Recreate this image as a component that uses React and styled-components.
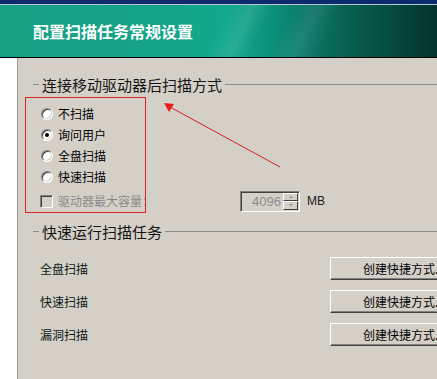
import React from 'react';
import styled, { createGlobalStyle } from 'styled-components';

const GlobalStyle = createGlobalStyle`
  html, body {
    margin: 0;
    padding: 0;
    overflow: hidden;
    background: #fff;
  }
  body {
    font-family: "Noto Sans CJK SC", "Noto Sans", sans-serif;
  }
`;

const Window = styled.div`
  position: relative;
  width: 437px;
  height: 379px;
  display: flex;
  flex-direction: column;
  overflow: hidden;
`;

const Header = styled.header`
  flex: none;
  height: 53px;
  border-top: 4px solid #0c2b6d;
  border-bottom: 1px solid #000;
  box-shadow: inset 0 1px 0 #b7c9d3;
  display: flex;
  align-items: center;
  padding-left: 33px;
  background:
    linear-gradient(115deg, transparent 0 50%, rgba(255, 255, 255, 0.1) 55%, transparent 59%, transparent 64%, rgba(255, 255, 255, 0.08) 69%, transparent 74%),
    linear-gradient(90deg, #18a083 0%, #14a588 40%, #11a88d 52%, #0d917b 62%, #0a7868 70%, #07604f 80%, #054a3f 90%, #02332b 100%);
`;

const Title = styled.h1`
  margin: 0;
  color: #fff;
  font-size: 16px;
  font-weight: 700;
  line-height: 1;
`;

const Body = styled.div`
  flex: 1;
  display: flex;
`;

const Strip = styled.div`
  flex: none;
  width: 17px;
  background: #fff;
  border-right: 1px solid #9c9c9c;
`;

const Panel = styled.main`
  flex: 1;
  min-width: 0;
  background: #d4d0c8;
  padding: 17px 0 0 15px;
  display: flex;
  flex-direction: column;
`;

const GroupTitle = styled.div`
  height: 18px;
  margin-top: ${p => p.$top || 0}px;
  display: flex;
  align-items: center;
  font-size: 15px;
  line-height: 1;
  color: #151515;
  white-space: nowrap;

  &::before {
    content: '';
    width: 6px;
    margin-right: 3px;
    border-top: 1px solid #8c8c8c;
  }

  &::after {
    content: '';
    flex: 1;
    margin-left: 3px;
    border-top: 1px solid #8c8c8c;
  }
`;

const OptionList = styled.div`
  margin: 10px 0 0 8px;
  display: flex;
  flex-direction: column;
`;

const RadioRow = styled.label`
  height: 21px;
  display: flex;
  align-items: center;
  gap: 5px;
  font-size: 12px;
  line-height: 1;
  color: #000;
`;

const Radio = styled.span`
  position: relative;
  box-sizing: border-box;
  width: 12px;
  height: 12px;
  border-radius: 50%;
  border: 1px solid;
  border-color: #808080 #ffffff #ffffff #808080;
  box-shadow: inset 1px 1px 0 #404040, inset -1px -1px 0 #d4d0c8;
  background: #fff;

  &::after {
    content: '';
    display: ${p => (p.$checked ? 'block' : 'none')};
    position: absolute;
    left: 3px;
    top: 3px;
    width: 4px;
    height: 4px;
    border-radius: 50%;
    background: #000;
  }
`;

const CheckRow = styled.div`
  height: 22px;
  margin: 3px 0 0 -1px;
  display: flex;
  align-items: center;
`;

const CheckCell = styled.label`
  flex: none;
  width: 200px;
  display: flex;
  align-items: center;
  gap: 5px;
  font-size: 12px;
  line-height: 1;
  color: #8a8a8a;
  white-space: nowrap;
`;

const Check = styled.span`
  box-sizing: border-box;
  width: 13px;
  height: 13px;
  border: 1px solid;
  border-color: #808080 #ffffff #ffffff #808080;
  box-shadow: inset 1px 1px 0 #404040;
  background: #d4d0c8;
`;

const Spin = styled.div`
  flex: none;
  box-sizing: border-box;
  width: 60px;
  height: 21px;
  display: flex;
  border: 1px solid;
  border-color: #808080 #ffffff #ffffff #808080;
  box-shadow: inset 1px 1px 0 #404040;
  background: #d4d0c8;
`;

const SpinValue = styled.span`
  flex: 1;
  text-align: right;
  padding: 0 2px 0 0;
  font-family: "Liberation Sans", Arial, sans-serif;
  font-size: 13px;
  line-height: 19px;
  color: #8c8c8c;
`;

const SpinButtons = styled.div`
  flex: none;
  width: 15px;
  margin: 1px 1px 1px 0;
  display: flex;
  flex-direction: column;
`;

const SpinButton = styled.span`
  flex: 1;
  box-sizing: border-box;
  border: 1px solid;
  border-color: #ffffff #404040 #404040 #ffffff;
  background: #d4d0c8;
  display: flex;
  align-items: center;
  justify-content: center;

  &::after {
    content: '';
    border-left: 2px solid transparent;
    border-right: 2px solid transparent;
    ${p => (p.$down ? 'border-top: 2px solid #8c8c8c;' : 'border-bottom: 2px solid #8c8c8c;')}
  }
`;

const Unit = styled.span`
  margin-left: 7px;
  font-family: "Liberation Sans", Arial, sans-serif;
  font-size: 12px;
  color: #1a1a1a;
`;

const TaskList = styled.div`
  margin: 17px 0 0 7px;
  display: flex;
  flex-direction: column;
`;

const TaskRow = styled.div`
  height: 33px;
  display: flex;
  align-items: flex-start;
`;

const TaskName = styled.span`
  flex: none;
  width: 290px;
  font-size: 12px;
  line-height: 23px;
  color: #0d1a12;
`;

const ShortcutButton = styled.button`
  flex: none;
  box-sizing: border-box;
  width: 148px;
  height: 23px;
  padding: 0;
  border: 1px solid;
  border-color: #ffffff #404040 #404040 #ffffff;
  box-shadow: inset -1px -1px 0 #808080;
  background: #d4d0c8;
  font-family: "Noto Sans CJK SC", sans-serif;
  font-size: 12px;
  line-height: 1;
  color: #000;
  text-align: center;
  white-space: nowrap;
`;

const Marks = styled.svg`
  position: absolute;
  left: 0;
  top: 0;
  pointer-events: none;
`;

const modes = [
  { label: '不扫描', checked: false },
  { label: '询问用户', checked: true },
  { label: '全盘扫描', checked: false },
  { label: '快速扫描', checked: false },
];

const tasks = ['全盘扫描', '快速扫描', '漏洞扫描'];

export default function App() {
  return (
    <Window>
      <GlobalStyle />
      <Header>
        <Title>配置扫描任务常规设置</Title>
      </Header>
      <Body>
        <Strip />
        <Panel>
          <GroupTitle>连接移动驱动器后扫描方式</GroupTitle>
          <OptionList>
            {modes.map(m => (
              <RadioRow key={m.label}>
                <Radio $checked={m.checked} />
                {m.label}
              </RadioRow>
            ))}
            <CheckRow>
              <CheckCell>
                <Check />
                驱动器最大容量：
              </CheckCell>
              <Spin>
                <SpinValue>4096</SpinValue>
                <SpinButtons>
                  <SpinButton />
                  <SpinButton $down />
                </SpinButtons>
              </Spin>
              <Unit>MB</Unit>
            </CheckRow>
          </OptionList>

          <GroupTitle $top={10}>快速运行扫描任务</GroupTitle>
          <TaskList>
            {tasks.map(t => (
              <TaskRow key={t}>
                <TaskName>{t}</TaskName>
                <ShortcutButton>创建快捷方式...</ShortcutButton>
              </TaskRow>
            ))}
          </TaskList>
        </Panel>
      </Body>

      {/* red annotation drawn over the dialog */}
      <Marks width="437" height="379" viewBox="0 0 437 379">
        <rect x="25.5" y="97.5" width="120" height="115" fill="none" stroke="#e02424" strokeWidth="1" />
        <line x1="280" y1="167" x2="170" y2="107" stroke="#d42020" strokeWidth="1" />
        <polygon points="164,103 174,104 169,112" fill="#ee1c1c" />
      </Marks>
    </Window>
  );
}
